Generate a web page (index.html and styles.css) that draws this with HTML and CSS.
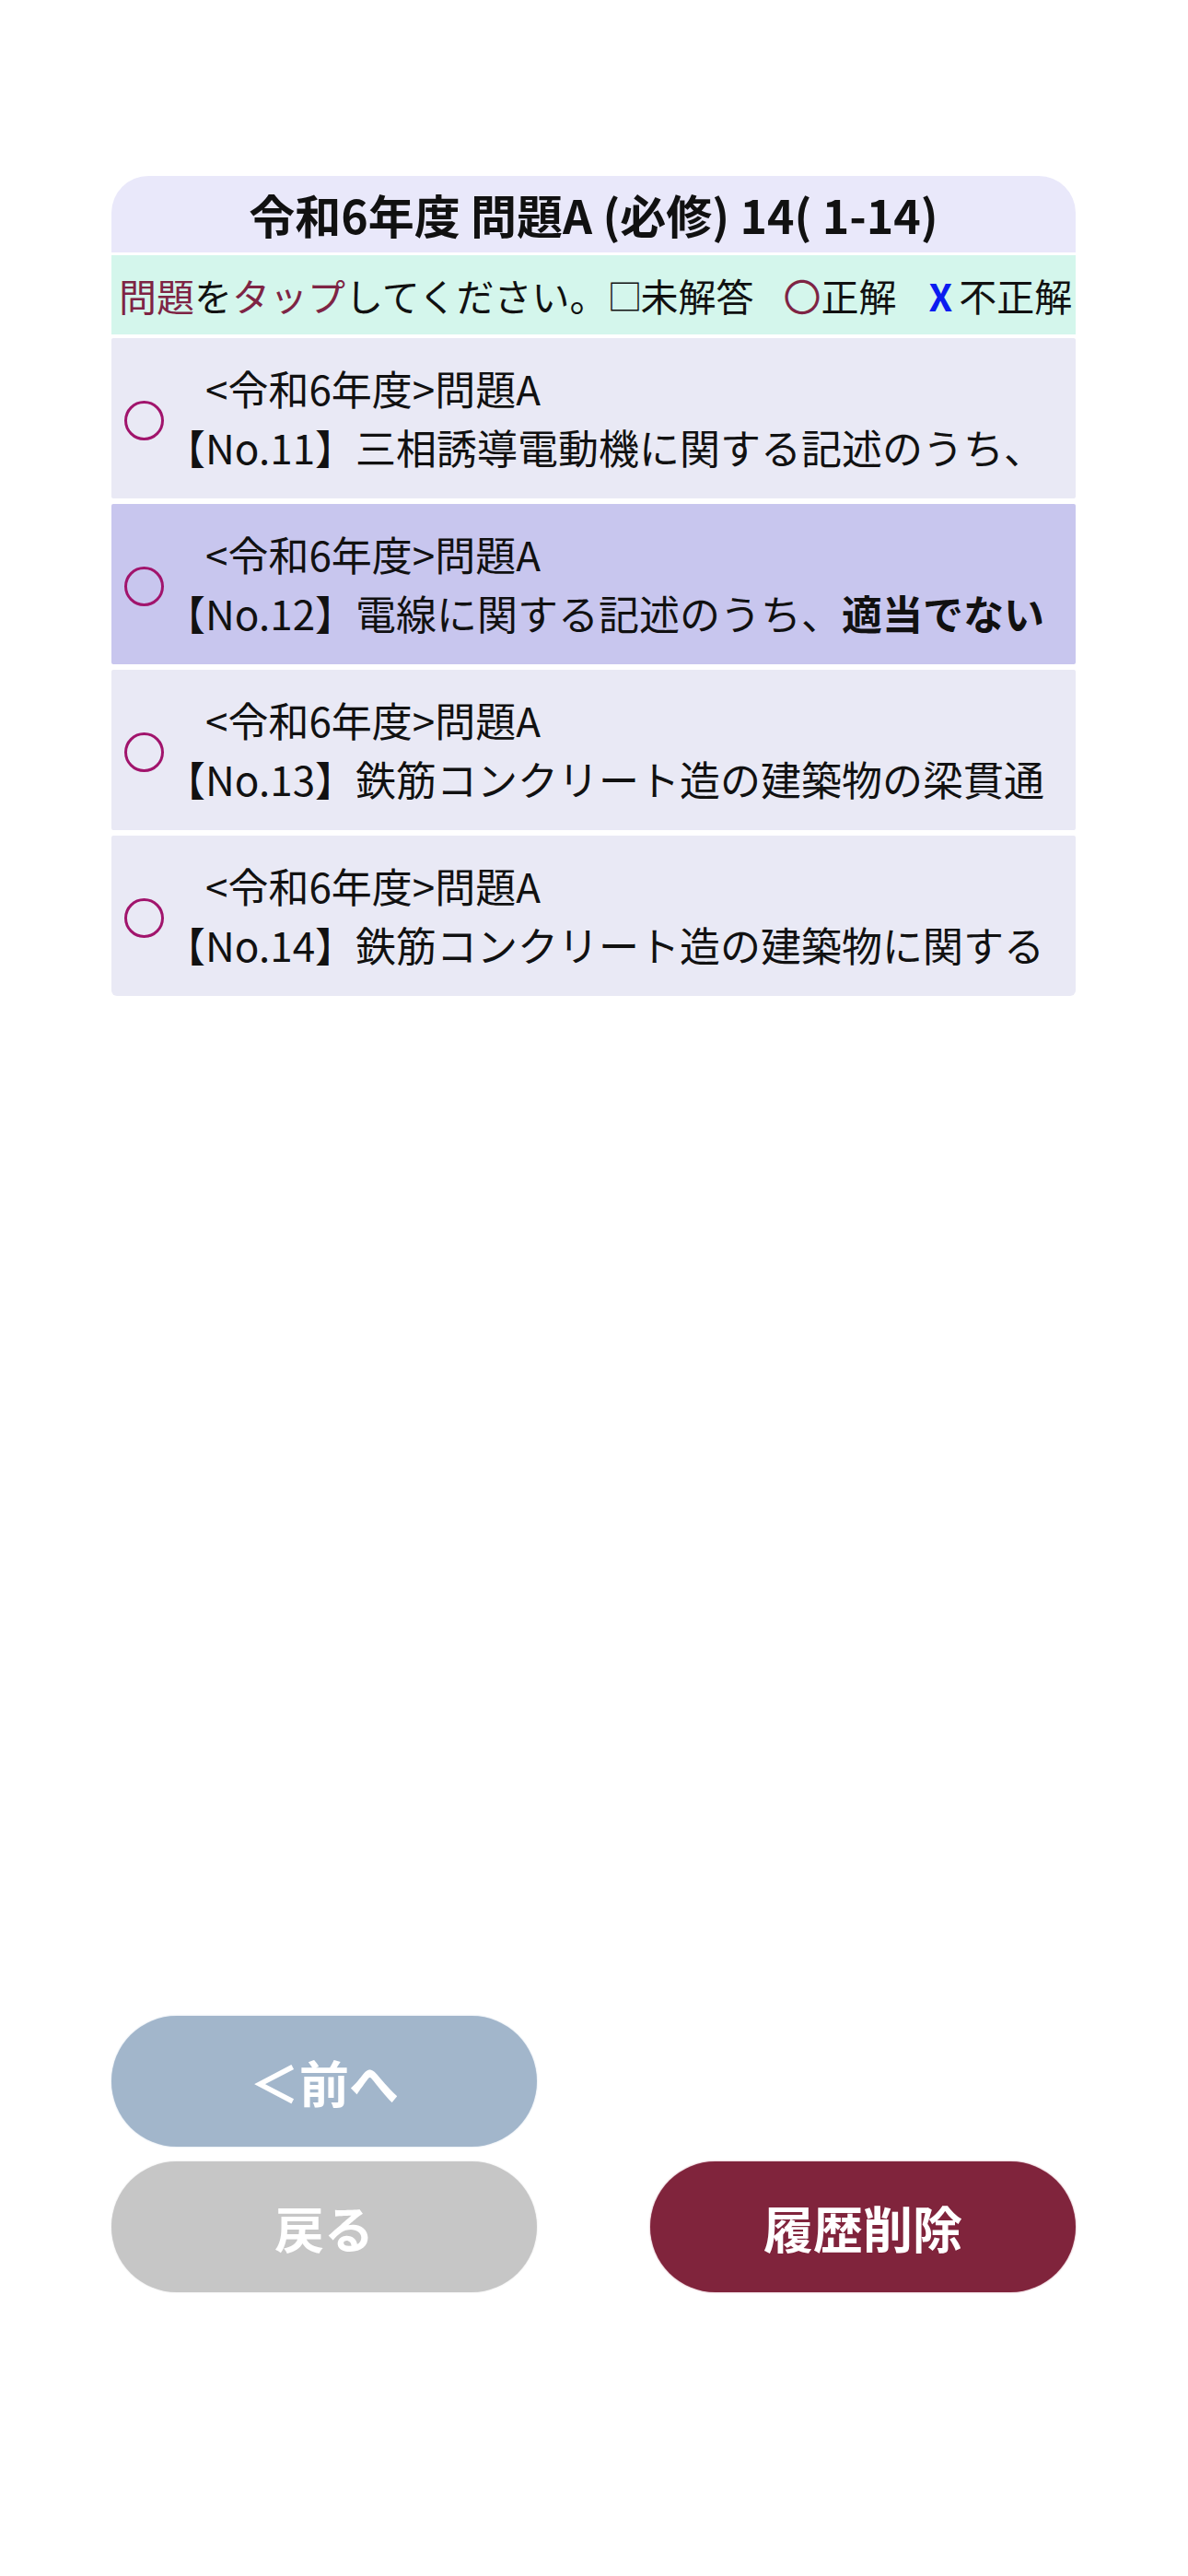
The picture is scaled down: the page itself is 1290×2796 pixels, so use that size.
FILE: index.html
```html
<!DOCTYPE html>
<html lang="ja">
<head>
    <meta charset="UTF-8">
    <meta name="viewport" content="width=device-width, initial-scale=1.0">
    <title>問題一覧</title>
    <link rel="stylesheet" href="styles.css">
</head>
<body>
<div class="page">

    <div class="panel">
        <h2 class="title">令和6年度 問題A (必修) 14( 1-14)</h2>

        <div class="legend">
            <span><span class="accent">問題</span>を<span class="accent">タップ</span>してください。</span>
            <span class="mark-box">□</span><span>未解答</span>
            <span class="mark-ok">〇</span><span>正解</span>
            <span class="mark-ng">X</span><span class="ng-label">不正解</span>
        </div>

        <ul class="question-list">
            <li class="question">
                <span class="status"></span>
                <div class="question-text">
                    <div class="q-head">&lt;令和6年度&gt;問題A</div>
                    <div class="q-body">【No.11】三相誘導電動機に関する記述のうち、</div>
                </div>
            </li>
            <li class="question selected">
                <span class="status"></span>
                <div class="question-text">
                    <div class="q-head">&lt;令和6年度&gt;問題A</div>
                    <div class="q-body">【No.12】電線に関する記述のうち、<b>適当でない</b></div>
                </div>
            </li>
            <li class="question">
                <span class="status"></span>
                <div class="question-text">
                    <div class="q-head">&lt;令和6年度&gt;問題A</div>
                    <div class="q-body">【No.13】鉄筋コンクリート造の建築物の梁貫通</div>
                </div>
            </li>
            <li class="question last">
                <span class="status"></span>
                <div class="question-text">
                    <div class="q-head">&lt;令和6年度&gt;問題A</div>
                    <div class="q-body">【No.14】鉄筋コンクリート造の建築物に関する</div>
                </div>
            </li>
        </ul>
    </div>

    <div class="nav-buttons">
        <button class="btn btn-prev">＜前へ</button>
        <span></span>
        <button class="btn btn-back">戻る</button>
        <button class="btn btn-clear">履歴削除</button>
    </div>

</div>
</body>
</html>
```

FILE: styles.css
```css
body {
    margin: 0;
    background-color: #ffffff;
    color: #111;
    font-family: "Noto Sans CJK JP", "Noto Sans", sans-serif;
}

.page {
    min-height: 100vh;
    display: flex;
    flex-direction: column;
    padding: 191px 122px 308px 121px;
    box-sizing: border-box;
}

/* Header */
.title {
    margin: 0 0 3px 0;
    height: 83px;
    line-height: 83px;
    background-color: #e9e8fa;
    border-radius: 40px 40px 0 0;
    text-align: center;
    font-size: 50px;
    font-weight: bold;
    color: #111;
}

/* Legend bar */
.legend {
    display: flex;
    align-items: center;
    height: 86px;
    margin-bottom: 4px;
    padding-left: 8px;
    background-color: #d4f6ec;
    font-size: 41px;
    white-space: nowrap;
    overflow: hidden;
}

.accent {
    color: #7e2444;
}

.mark-box {
    width: 36px;
    font-size: 38px;
    line-height: 1;
}

.mark-ok {
    margin-left: 32px;
    color: #7e2444;
}

.mark-ng {
    margin-left: 35px;
    color: #0a1cf0;
    font-weight: bold;
}

.ng-label {
    margin-left: 7px;
}

/* Question rows */
.question-list {
    list-style: none;
    margin: 0;
    padding: 0;
    display: flex;
    flex-direction: column;
    gap: 6px;
}

.question {
    height: 174px;
    display: flex;
    align-items: center;
    background-color: #e9e9f5;
    border-radius: 2px;
    overflow: hidden;
}

.question.selected {
    background-color: #c8c6ee;
}

.question.last {
    border-radius: 2px 2px 6px 6px;
}

.status {
    flex: none;
    width: 37px;
    height: 37px;
    margin: 4px 1px 0 14px;
    border: 3px solid #a1146c;
    border-radius: 50%;
}

.question-text {
    flex: 1;
    min-width: 0;
    margin-top: -2px;
    font-size: 44px;
    line-height: 64px;
    white-space: nowrap;
    overflow: hidden;
}

.q-head {
    padding-left: 44px;
}

/* Bottom buttons */
.nav-buttons {
    margin-top: auto;
    display: grid;
    grid-template-columns: 462px 462px;
    justify-content: space-between;
    row-gap: 16px;
}

.btn {
    height: 142px;
    border: none;
    border-radius: 71px;
    color: #ffffff;
    font-family: "Noto Sans CJK JP", sans-serif;
    font-size: 54px;
    font-weight: bold;
    cursor: pointer;
}

.btn-prev {
    background-color: #a2b6cb;
    box-shadow: 0 0 2px #c9d6e4;
}

.btn-back {
    background-color: #c6c6c6;
    box-shadow: 0 0 2px #dddddd;
}

.btn-clear {
    background-color: #80243c;
    box-shadow: 0 0 2px #c07e90;
}
```
